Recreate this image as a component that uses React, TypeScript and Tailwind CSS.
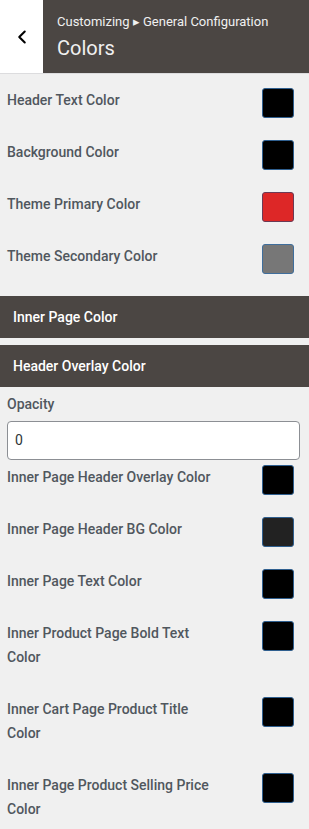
import { ChevronLeft } from 'lucide-react';

type Row = { label: string; color: string; border?: string };

const topRows: Row[] = [
  { label: 'Header Text Color', color: '#000000' },
  { label: 'Background Color', color: '#000000' },
  { label: 'Theme Primary Color', color: '#dd2727', border: '#6b3a55' },
  { label: 'Theme Secondary Color', color: '#777777', border: '#3f6e9c' },
];

const innerRows: Row[] = [
  { label: 'Inner Page Header Overlay Color', color: '#000000' },
  { label: 'Inner Page Header BG Color', color: '#222222' },
  { label: 'Inner Page Text Color', color: '#000000' },
  { label: 'Inner Product Page Bold Text Color', color: '#000000' },
  { label: 'Inner Cart Page Product Title Color', color: '#000000' },
  { label: 'Inner Page Product Selling Price Color', color: '#000000' },
];

function ColorRow({ row, last }: { row: Row; last?: boolean }) {
  return (
    <div className={`flex items-start justify-between ${last ? '' : 'mb-[28px]'}`}>
      <div className="w-[215px] text-[14px] leading-[24px] font-medium text-[#50575e]">
        {row.label}
      </div>
      <div
        className="w-[32px] h-[30px] -mb-[6px] rounded-[3px] border border-[#2f5f8f]"
        style={{ backgroundColor: row.color, borderColor: row.border }}
      />
    </div>
  );
}

function SectionBar({ title }: { title: string }) {
  return (
    <div className="h-[42px] bg-[#4b4643] flex items-center px-[13px] text-[14px] font-medium text-white">
      {title}
    </div>
  );
}

export default function App() {
  return (
    <div className="w-[309px] min-h-[829px] bg-[#f0f0f0] font-['Roboto',sans-serif] overflow-hidden">
      <div className="flex h-[74px] border-b border-[#dcdcde]">
        <div className="w-[43px] bg-white flex items-center justify-center">
          <ChevronLeft className="w-[22px] h-[22px] text-black" strokeWidth={2.25} />
        </div>
        <div className="flex-1 bg-[#4b4643] pl-[14px] pt-[13px]">
          <div className="text-[13px] leading-[18px] text-[#f0f0f0]">
            Customizing ▸ General Configuration
          </div>
          <div className="text-[20px] leading-[28px] text-[#f0f0f0] mt-[3px]">Colors</div>
        </div>
      </div>

      <div className="pl-[7px] pr-[15px] pt-[14px]">
        {topRows.map((r) => (
          <ColorRow key={r.label} row={r} />
        ))}
      </div>

      <div>
        <SectionBar title="Inner Page Color" />
        <div className="h-[7px]" />
        <SectionBar title="Header Overlay Color" />
      </div>

      <div className="pl-[7px] pr-[9px] pt-[5px]">
        <div className="text-[14px] leading-[24px] font-medium text-[#50575e]">Opacity</div>
        <div className="mt-[5px] h-[39px] bg-white border border-[#8c8f94] rounded-[4px] flex items-center px-[7px] text-[14px] text-[#2c3338]">
          0
        </div>
      </div>

      <div className="pl-[7px] pr-[15px] pt-[5px]">
        {innerRows.map((r, i) => (
          <ColorRow key={r.label} row={r} last={i === innerRows.length - 1} />
        ))}
      </div>
    </div>
  );
}
